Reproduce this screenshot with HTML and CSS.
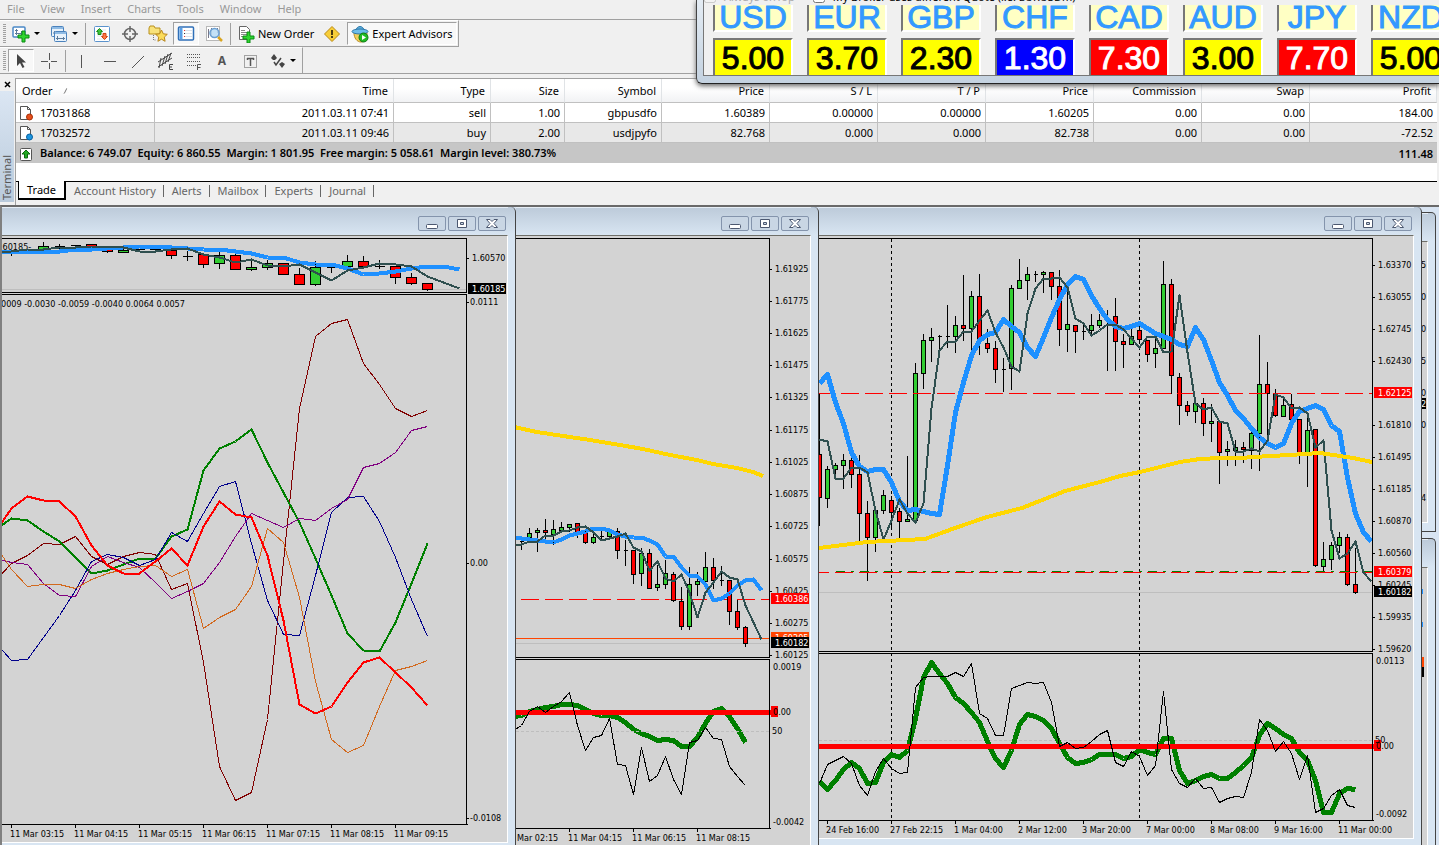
FILE: index.html
```html
<!DOCTYPE html>
<html lang="en">
<head>
  <meta charset="UTF-8" />
  <title>Trading Terminal</title>
  <link rel="stylesheet" href="styles.css">
</head>
<body>
  <nav class="menu">
    <a href="#">File</a>
    <a href="#">View</a>
    <a href="#">Insert</a>
    <a href="#">Charts</a>
    <a href="#">Tools</a>
    <a href="#">Window</a>
    <a href="#">Help</a>
  </nav>

  <div class="toolbars">
    <div class="toolbar">
      <span class="grip"></span>
      <button class="tool drop" aria-label="New chart">
        <svg width="18" height="18" viewBox="0 0 18 18"><rect x="1" y="2" width="12" height="10" rx="1" fill="#fff" stroke="#4a88c6" stroke-width="1.500"/><path d="M4.500 4v6M3 8.500h7M3 5.500h3M9.500 6v4" stroke="#5d7c9c" fill="none"/><path d="M10 6h3v4h4v3h-4v4h-3v-4H6v-3h4z" fill="#2fd52f" stroke="#0a8a12"/></svg>
        <i class="caret"></i>
      </button>
      <button class="tool drop" aria-label="Profiles">
        <svg width="18" height="18" viewBox="0 0 18 18"><rect x="1.500" y="1.500" width="12" height="10" rx="1" fill="#e8f2fb" stroke="#4a82bd"/><path d="M2 3h11" stroke="#8fbbe4" stroke-width="2"/><path d="M3 8h8M4.500 6v4" stroke="#5d7c9c"/><rect x="4.500" y="6.500" width="12" height="10" rx="1" fill="#e8f2fb" stroke="#4a82bd"/><path d="M5 8h11" stroke="#8fbbe4" stroke-width="2"/><path d="M6 13.500h9M7.500 11v4M13.500 12v3" stroke="#5d7c9c"/></svg>
        <i class="caret"></i>
      </button>
      <span class="sep"></span>
      <button class="tool" aria-label="Market watch">
        <svg width="18" height="18" viewBox="0 0 18 18"><rect x="1.500" y="1.500" width="15" height="15" rx="1" fill="#fff" stroke="#5b93cd"/><path d="M4 5h9M4 8h9M4 11h9M4 14h9" stroke="#dfe6ee"/><path d="M6.500 3.500l3 3H8v3H5v-3H3.500z" fill="#3cc63c" stroke="#1a8a1a"/><path d="M11.500 14.500l3-3H13v-3h-3v3H8.500z" fill="#ff7744" stroke="#d04414"/></svg>
      </button>
      <button class="tool" aria-label="Data window">
        <svg width="18" height="18" viewBox="0 0 18 18" fill="none" stroke="#666" stroke-width="1.500"><circle cx="9" cy="9" r="5.500"/><path d="M9 1v6M9 11v6M1 9h6M11 9h6"/></svg>
      </button>
      <button class="tool" aria-label="Navigator">
        <svg width="20" height="18" viewBox="0 0 20 18"><path d="M1 3l1-2h4l1 2h5v6H1z" fill="#f8e27a" stroke="#b8901c"/><path d="M5.500 10v5h3" stroke="#777" stroke-dasharray="1 1" fill="none"/><path d="M13.500 5l1.800 3.800 4 .5-3 2.800.8 4.200-3.600-2.100-3.600 2.100.8-4.200-3-2.800 4-.5z" fill="#fbdc5a" stroke="#b8861c"/></svg>
      </button>
      <button class="tool pressed" aria-label="Terminal">
        <svg width="18" height="18" viewBox="0 0 18 18"><rect x="1.500" y="2" width="15" height="13" rx="1" fill="#fff" stroke="#2f6fb8" stroke-width="1.500"/><path d="M4 3v11" stroke="#5aa0e6" stroke-width="3"/><path d="M8 5.500h7M8 8.500h7M8 11.500h7" stroke="#d9e1ea"/><path d="M7 5.500h1M7 11.500h1" stroke="#e33"/><path d="M7 8.500h1" stroke="#333"/></svg>
      </button>
      <button class="tool" aria-label="Strategy tester">
        <svg width="18" height="18" viewBox="0 0 18 18"><rect x="1.500" y="1.500" width="13" height="14" fill="#fff" stroke="#b8b8b8"/><path d="M3.500 4v9M6.500 3v8M12.500 3v5" stroke="#778"/><circle cx="9.500" cy="8" r="4.500" fill="#b8dcf6" fill-opacity=".85" stroke="#6a9fd2" stroke-width="1.500"/><path d="M13 12l4 4" stroke="#d9a520" stroke-width="2.500"/></svg>
      </button>
      <span class="sep"></span>
      <button class="tool wide">
        <svg width="18" height="18" viewBox="0 0 18 18"><path d="M2.500 1.500h7l3 3v10h-10z" fill="#fff" stroke="#666"/><path d="M4 5.500h4M4 7.500h6M4 9.500h6M4 11.500h3" stroke="#888"/><path d="M10 7h3v4h4v3h-4v4h-3v-4H6v-3h4z" fill="#2fd52f" stroke="#0a8a12"/></svg>
        New Order
      </button>
      <button class="tool" aria-label="MetaEditor">
        <svg width="18" height="18" viewBox="0 0 18 18"><path d="M9 1.500l7.500 7.500L9 16.500 1.500 9z" fill="#f7cd38" stroke="#bb8a10"/><path d="M9 5v5M9 11v2" stroke="#4a3a10" stroke-width="2"/></svg>
      </button>
      <button class="tool wide pressed">
        <svg width="18" height="18" viewBox="0 0 18 18"><path d="M3 8c0 5 3 9 7 9s6-4 6-9z" fill="#f2cf5a" stroke="#b88d24"/><path d="M5 6c0-6 8-6 8 0z" fill="#5db0e0" stroke="#2f78a8"/><ellipse cx="9" cy="6.500" rx="8" ry="2.500" fill="#6cbdea" stroke="#2f78a8"/><circle cx="12.500" cy="12.500" r="4.500" fill="#22bb22" stroke="#0d7a14"/><path d="M11 10v5l4-2.500z" fill="#fff"/></svg>
        Expert Advisors
      </button>
    </div>
    <div class="toolbar">
      <span class="grip"></span>
      <button class="tool pressed" aria-label="Cursor">
        <svg width="16" height="16" viewBox="0 0 16 16"><path d="M4 1v12l3-3 2.500 5 2-1L9 9.500h4z" fill="#444"/></svg>
      </button>
      <button class="tool" aria-label="Crosshair">
        <svg width="16" height="16" viewBox="0 0 16 16" stroke="#555"><path d="M8.500 0v7M8.500 10v6M0 8.500h7M10 8.500h6"/></svg>
      </button>
      <span class="sep"></span>
      <button class="tool" aria-label="Vertical line">
        <svg width="16" height="16" viewBox="0 0 16 16" stroke="#555"><path d="M7.500 2v13"/></svg>
      </button>
      <button class="tool" aria-label="Horizontal line">
        <svg width="16" height="16" viewBox="0 0 16 16" stroke="#555"><path d="M2 8.500h12"/></svg>
      </button>
      <button class="tool" aria-label="Trendline">
        <svg width="16" height="16" viewBox="0 0 16 16" stroke="#555"><path d="M2 15L14 3"/></svg>
      </button>
      <button class="tool" aria-label="Channel">
        <svg width="18" height="18" viewBox="0 0 18 18" stroke="#444" fill="none"><path d="M1 10L15 1M1 15L15 6M4 6L2 16M8 4L5 14M11 2L8 12M14 1l-3 9"/><path d="M16 12.500h-3.500v5H16M12.500 15H15"/></svg>
      </button>
      <button class="tool" aria-label="Fibonacci">
        <svg width="18" height="18" viewBox="0 0 18 18" stroke="#555" fill="none"><path d="M2 2.500h14M2 5.500h14M2 9.500h14M2 13.500h9" stroke-dasharray="1 1"/><path d="M16 12.500h-3.500V18M12.500 15.500h3"/></svg>
      </button>
      <button class="tool letter">A</button>
      <button class="tool" aria-label="Text label">
        <svg width="16" height="16" viewBox="0 0 16 16" stroke="#555" fill="none"><rect x="2.500" y="2.500" width="12" height="12" stroke-dasharray="1 1"/><path d="M5 5.500h7M8.500 5v8M5.500 5v2M11.500 5v2" stroke-width="1.500"/></svg>
      </button>
      <button class="tool drop" aria-label="Arrows">
        <svg width="16" height="16" viewBox="0 0 16 16"><path d="M1 5l3-4 3 4-2 2H3zM9 11l3-2 3 2-3 4z" fill="#444"/><path d="M4 9l2 3 5-7" stroke="#444" stroke-width="1.500" fill="none"/></svg>
        <i class="caret"></i>
      </button>
    </div>
  </div>

  <section class="terminal">
    <div class="caption">
      <button class="close" aria-label="Close terminal">
        <svg width="7" height="7" viewBox="0 0 7 7"><path d="M1 1l5 5M6 1L1 6" stroke="#000" stroke-width="1.500"/></svg>
      </button>
      <span class="caption-text">Terminal</span>
    </div>
    <div class="terminal-body">
      <table class="orders">
        <colgroup>
          <col style="width:139px"><col style="width:239px"><col style="width:97px"><col style="width:74px">
          <col style="width:97px"><col style="width:108px"><col style="width:108px"><col style="width:108px">
          <col style="width:108px"><col style="width:108px"><col style="width:108px"><col>
        </colgroup>
        <thead>
          <tr>
            <th>Order <svg class="sort" width="8" height="8" viewBox="0 0 8 8"><path d="M1 7L4 1" stroke="#777"/><path d="M4 1l3 6H1" stroke="#fff" fill="none"/></svg></th>
            <th>Time</th><th>Type</th><th>Size</th><th>Symbol</th><th>Price</th><th>S / L</th>
            <th>T / P</th><th>Price</th><th>Commission</th><th>Swap</th><th>Profit</th>
          </tr>
        </thead>
        <tbody>
          <tr>
            <td><svg class="doc" width="15" height="16" viewBox="0 0 15 16"><path d="M1.500 1.500h7l3 3v10h-10z" fill="#fff" stroke="#555"/><path d="M8.500 1.500v3h3" fill="none" stroke="#555"/><circle cx="10.500" cy="12" r="3" fill="#e8501c" stroke="#a83008"/></svg>17031868</td>
            <td>2011.03.11 07:41</td><td>sell</td><td>1.00</td><td>gbpusdfo</td><td>1.60389</td><td>0.00000</td>
            <td>0.00000</td><td>1.60205</td><td>0.00</td><td>0.00</td><td>184.00</td>
          </tr>
          <tr>
            <td><svg class="doc" width="15" height="16" viewBox="0 0 15 16"><path d="M1.500 1.500h7l3 3v10h-10z" fill="#fff" stroke="#555"/><path d="M8.500 1.500v3h3" fill="none" stroke="#555"/><circle cx="10.500" cy="12" r="3" fill="#1c96e0" stroke="#0860a0"/></svg>17032572</td>
            <td>2011.03.11 09:46</td><td>buy</td><td>2.00</td><td>usdjpyfo</td><td>82.768</td><td>0.000</td>
            <td>0.000</td><td>82.738</td><td>0.00</td><td>0.00</td><td>-72.52</td>
          </tr>
        </tbody>
        <tfoot>
          <tr>
            <td colspan="11"><svg class="doc" width="15" height="16" viewBox="0 0 15 16"><rect x="1.500" y="2.500" width="11" height="12" rx="1" fill="#fff" stroke="#555"/><path d="M7 4l4 4H8.500v4h-3V8H3z" fill="#22aa22" stroke="#0d6a10"/></svg>Balance: 6 749.07&nbsp; Equity: 6 860.55&nbsp; Margin: 1 801.95&nbsp; Free margin: 5 058.61&nbsp; Margin level: 380.73%</td>
            <td>111.48</td>
          </tr>
        </tfoot>
      </table>
      <div class="tabs">
        <button class="tab active">Trade</button>
        <button class="tab">Account History</button>
        <button class="tab">Alerts</button>
        <button class="tab">Mailbox</button>
        <button class="tab">Experts</button>
        <button class="tab">Journal</button>
      </div>
    </div>
  </section>

  <main class="desktop">
    <section class="window">
      <div class="title">
        <button aria-label="Minimize"><svg width="12" height="11" viewBox="0 0 12 11"><rect x=".5" y="6.500" width="11" height="4" rx="1" fill="#fff" stroke="#4c5870"/></svg></button>
        <button aria-label="Restore"><svg width="12" height="11" viewBox="0 0 12 11"><path d="M1.500 1.500h9v8h-9zM4.500 4.500v2h3v-2z" fill="#fff" fill-rule="evenodd" stroke="#4c5870"/></svg></button>
        <button aria-label="Close"><svg width="12" height="11" viewBox="0 0 12 11"><path d="M.5 1.500h3.500L6 3.500l2-2h3.500L8 5.500l3.500 4H8l-2-2-2 2H.5l3.500-4z" fill="#fff" stroke="#4c5870"/></svg></button>
      </div>
      <div class="client"><svg class="chart" id="chartSpreads"></svg></div>
    </section>
    <section class="window">
      <div class="title">
        <button aria-label="Minimize"><svg width="12" height="11" viewBox="0 0 12 11"><rect x=".5" y="6.500" width="11" height="4" rx="1" fill="#fff" stroke="#4c5870"/></svg></button>
        <button aria-label="Restore"><svg width="12" height="11" viewBox="0 0 12 11"><path d="M1.500 1.500h9v8h-9zM4.500 4.500v2h3v-2z" fill="#fff" fill-rule="evenodd" stroke="#4c5870"/></svg></button>
        <button aria-label="Close"><svg width="12" height="11" viewBox="0 0 12 11"><path d="M.5 1.500h3.500L6 3.500l2-2h3.500L8 5.500l3.500 4H8l-2-2-2 2H.5l3.500-4z" fill="#fff" stroke="#4c5870"/></svg></button>
      </div>
      <div class="client"><svg class="chart" id="chartM15"></svg></div>
    </section>
    <section class="window">
      <div class="title">
        <button aria-label="Minimize"><svg width="12" height="11" viewBox="0 0 12 11"><rect x=".5" y="6.500" width="11" height="4" rx="1" fill="#fff" stroke="#4c5870"/></svg></button>
        <button aria-label="Restore"><svg width="12" height="11" viewBox="0 0 12 11"><path d="M1.500 1.500h9v8h-9zM4.500 4.500v2h3v-2z" fill="#fff" fill-rule="evenodd" stroke="#4c5870"/></svg></button>
        <button aria-label="Close"><svg width="12" height="11" viewBox="0 0 12 11"><path d="M.5 1.500h3.500L6 3.500l2-2h3.500L8 5.500l3.500 4H8l-2-2-2 2H.5l3.500-4z" fill="#fff" stroke="#4c5870"/></svg></button>
      </div>
      <div class="client"><svg class="chart" id="chartH4"></svg></div>
    </section>
    <div class="stack">
      <section class="window upper">
        <div class="title"></div>
        <div class="client"><svg class="chart" id="backUpper"></svg></div>
      </section>
      <section class="window lower">
        <div class="title"></div>
        <div class="client"><svg class="chart" id="backLower"></svg></div>
      </section>
    </div>
  </main>

  <aside class="strength">
    <div class="strength-body">
      <div class="options">
        <label class="off"><input type="checkbox" disabled> Always onTop</label>
        <label><input type="checkbox"> My Broker uses different Quote (i.e. EURUSDm)</label>
      </div>
      <div class="meters">
        <span class="code">USD</span><span class="code">EUR</span><span class="code">GBP</span><span class="code">CHF</span>
        <span class="code">CAD</span><span class="code">AUD</span><span class="code">JPY</span><span class="code">NZD</span>
        <span class="value">5.00</span><span class="value">3.70</span><span class="value">2.30</span><span class="value low">1.30</span>
        <span class="value high">7.30</span><span class="value">3.00</span><span class="value high">7.70</span><span class="value">5.00</span>
      </div>
    </div>
  </aside>

  <script src="charts.js"></script>
</body>
</html>
```

FILE: styles.css
```css
* {
  box-sizing: border-box;
}
html, body {
  margin: 0;
  padding: 0;
  height: 100%;
}
body {
  display: flex;
  flex-direction: column;
  position: relative;
  overflow: hidden;
  background: #f0f0f0;
  color: #000;
  font-family: "Noto Sans", "Open Sans", sans-serif;
  font-size: 11px;
  line-height: 16px;
}
button {
  font: inherit;
  color: inherit;
  background: none;
  border: 0;
  padding: 0;
}
svg {
  flex: none;
}

/* menu */
.menu {
  display: flex;
  gap: 16px;
  height: 20px;
  padding: 1px 7px;
  border-bottom: 1px solid #a0a0a0;
}
.menu a {
  color: #999;
  text-decoration: none;
}

/* toolbars */
.toolbars {
  height: 54px;
  border-bottom: 1px solid #a0a0a0;
}
.toolbar {
  display: flex;
  align-items: center;
  gap: 2px;
  width: max-content;
  height: 27px;
  padding: 1px 1px 1px 3px;
  border-right: 1px solid #a0a0a0;
  border-bottom: 1px solid #a0a0a0;
  border-top: 1px solid #fff;
}
.grip {
  width: 3px;
  height: 20px;
  background: repeating-linear-gradient(#a0a0a0 0 1px, #f0f0f0 1px 2px);
}
.sep {
  width: 1px;
  height: 22px;
  margin: 0 1px;
  background: #a0a0a0;
}
.tool {
  display: flex;
  align-items: center;
  justify-content: center;
  width: 26px;
  height: 23px;
  white-space: nowrap;
}
.tool.drop {
  width: 36px;
  gap: 4px;
}
.tool.wide {
  width: auto;
  gap: 3px;
  padding: 0 3px;
}
.tool.pressed {
  background: #f8f8f8;
  border: 1px solid;
  border-color: #a0a0a0 #fff #fff #a0a0a0;
}
.tool.letter {
  color: #555;
  font-size: 12px;
  font-weight: bold;
}
.caret {
  border: 3px solid transparent;
  border-top-color: #000;
  border-bottom: 0;
}

/* terminal */
.terminal {
  display: flex;
  margin-top: 4px;
  height: 127px;
}
.caption {
  display: flex;
  flex-direction: column;
  align-items: center;
  width: 15px;
  padding: 0 1px 3px 0;
}
.close {
  display: flex;
  align-items: center;
  height: 13px;
}
.caption-text {
  flex: 1;
  width: 14px;
  padding-top: 2px;
  background: linear-gradient(#b9cadb, #dbe6f3);
  color: #555;
  line-height: 14px;
  writing-mode: vertical-rl;
  transform: rotate(180deg);
}
.terminal-body {
  display: flex;
  flex-direction: column;
  flex: 1;
  min-width: 0;
  margin-right: 2px;
  border-left: 1px solid #a0a0a0;
  border-top: 1px solid #a0a0a0;
  background: #fff;
}
.orders {
  width: 100%;
  table-layout: fixed;
  border-collapse: separate;
  border-spacing: 0;
}
.orders th {
  height: 24px;
  padding: 0 5px;
  border-right: 1px solid #e0e3e6;
  border-bottom: 1px solid #c0c0c0;
  background: linear-gradient(#fff 40%, #f1f2f4);
  font-weight: normal;
  text-align: right;
}
.orders td {
  height: 20px;
  padding: 1px 4px 0;
  border-right: 1px solid #c0c0c0;
  border-bottom: 1px solid #c0c0c0;
  text-align: right;
  white-space: nowrap;
}
.orders th:first-child {
  padding-left: 6px;
  text-align: left;
}
.orders td:first-child {
  padding-left: 3px;
  text-align: left;
}
.orders td:last-child {
  border-right: 0;
}
.orders tbody tr:nth-child(2) td {
  background: #e8e8e8;
}
.orders tfoot td {
  border: 0;
  background: #c6c6c6;
  font-weight: 600;
}
.sort {
  margin-left: 8px;
}
.doc {
  margin: -2px 6px 0 0;
  vertical-align: middle;
}
.tabs {
  display: flex;
  margin-top: auto;
  height: 24px;
  padding-left: 2px;
  border-top: 1px solid #000;
  background: #f0f0f0;
  color: #666;
}
.tab {
  position: relative;
  height: 18px;
  padding: 0 8px;
  line-height: 18px;
}
.tab + .tab::after {
  content: "";
  position: absolute;
  right: 0;
  top: 3px;
  height: 12px;
  border-right: 1px solid #666;
}
.tab.active {
  margin-top: -1px;
  height: 19px;
  border: 1px solid #000;
  border-top: 0;
  border-right-width: 2px;
  border-bottom-width: 2px;
  background: #fff;
  color: #000;
}

/* chart windows */
.desktop {
  display: flex;
  flex: 1;
  min-height: 0;
  overflow: hidden;
  border-top: 2px solid #696969;
  border-left: 2px solid #808080;
  background: #d8e4f2;
}
.window {
  display: flex;
  flex-direction: column;
  flex: none;
  padding-right: 7px;
  border-right: 1px solid #444;
  border-top-right-radius: 5px;
  background: linear-gradient(#bccad9, #d8e5f2 28px);
}
.title {
  display: flex;
  flex: none;
  justify-content: flex-end;
  gap: 2px;
  height: 28px;
  padding: 8px 2px 0 0;
  border-top: 1px solid #e6eef6;
}
.title button {
  display: flex;
  align-items: center;
  justify-content: center;
  width: 28px;
  height: 15px;
  border: 1px solid #8494ac;
  border-radius: 2px;
  background: #c9d6e4;
}
.client {
  flex: none;
  border-top: 1px solid #6e6e68;
  border-right: 1px solid #fff;
  border-bottom: 1px solid #fff;
  background: #d3d3d3;
}
.chart {
  display: block;
  font-family: "DejaVu Sans Condensed", "Noto Sans", sans-serif;
  font-size: 9px;
}
.stack {
  display: flex;
  flex-direction: column;
  align-items: flex-start;
  flex: 1;
  gap: 6px;
  min-width: 0;
  padding-top: 5px;
  overflow: hidden;
}
.stack .window {
  padding-bottom: 8px;
  border-top: 1px solid #444;
}
.stack .upper {
  border-bottom: 1px solid #444;
}

/* currency strength window */
.strength {
  position: absolute;
  left: 696px;
  right: 0;
  top: 0;
  height: 84px;
  padding: 0 0 7px 6px;
  overflow: hidden;
  border-left: 1px solid #444;
  border-bottom: 1px solid #222;
  border-bottom-left-radius: 6px;
  background: linear-gradient(#e4ecf4, #c4d2e0);
  box-shadow: 0 2px 5px #666;
}
.strength-body {
  height: 76px;
  overflow: hidden;
  border-left: 1px solid #777;
  border-bottom: 1px solid #777;
  background: #f0f0f0;
}
.options {
  display: flex;
  gap: 18px;
  height: 16px;
  margin-top: -11px;
  white-space: nowrap;
}
.options label {
  display: flex;
  align-items: center;
  gap: 8px;
}
.options input {
  width: 12px;
  height: 12px;
  margin: 0;
}
.options .off {
  color: #aaa;
}
.meters {
  display: grid;
  grid-template-columns: repeat(8, 80px);
  gap: 6px 14px;
  padding-left: 9px;
  font-family: "Liberation Sans", Arial, sans-serif;
  font-size: 32px;
  text-align: center;
}
.meters span {
  border: 2px solid;
  border-color: #777 #fff #fff #777;
}
.meters .code {
  height: 27px;
  border-top: 0;
  background: #ffffc4;
  color: #3399ff;
  line-height: 24px;
  -webkit-text-stroke: 1px;
}
.meters .value {
  height: 40px;
  background: #ff0;
  line-height: 36px;
  -webkit-text-stroke: 1px;
}
.meters .low {
  background: #00f;
  color: #fff;
}
.meters .high {
  background: #f00;
  color: #fff;
}
```

FILE: charts.js
```js
const NS = "http://www.w3.org/2000/svg";
const BLUE = "#1e90ff", SLATE = "#2f4f4f", GOLD = "#ffd700";

function add(svg, tag, attrs, text) {
  const el = document.createElementNS(NS, tag);
  for (const key in attrs) el.setAttribute(key, attrs[key]);
  if (text !== undefined) el.textContent = text;
  svg.appendChild(el);
}

function open(id, x, y, w, h) {
  const svg = document.getElementById(id);
  svg.setAttribute("viewBox", [x, y, w, h].join(" "));
  svg.setAttribute("width", w);
  svg.setAttribute("height", h);
  return svg;
}

function line(svg, x1, y1, x2, y2, color, dash, width) {
  add(svg, "path", {
    d: `M${x1} ${y1}L${x2} ${y2}`, stroke: color, "stroke-width": width || 1,
    "stroke-dasharray": dash || "none", "shape-rendering": "crispEdges"
  });
}

// evenly spaced values
function series(svg, x0, step, ys, color, width) {
  curve(svg, ys.map((y, i) => [x0 + i * step + 0.5, y + 0.5]), color, width);
}

function curve(svg, pts, color, width) {
  add(svg, "polyline", {
    points: pts.map(p => p.join(",")).join(" "), fill: "none", stroke: color,
    "stroke-width": width, "stroke-linejoin": "round", "shape-rendering": "crispEdges"
  });
}

// each bar: high, body top, body bottom, low, direction (1 up, -1 down, 0 flat)
function candles(svg, x0, step, half, bars) {
  bars.forEach((b, i) => {
    if (!b) return;
    const x = x0 + i * step + 0.5;
    line(svg, x, b[0], x, b[3] + 1, "#000");
    if (b[4] === 0) {
      line(svg, x - half, b[1] + 0.5, x + half, b[1] + 0.5, "#000");
      return;
    }
    add(svg, "rect", {
      x: x - half, y: b[1] + 0.5, width: half * 2, height: b[2] - b[1],
      fill: b[4] > 0 ? "#32cd32" : "#f00", stroke: "#000", "shape-rendering": "crispEdges"
    });
  });
}

function label(svg, x, y, text, color) {
  add(svg, "text", { x: x, y: y + 3, fill: color || "#000" }, text);
}

function tag(svg, x, y, text, fill) {
  add(svg, "rect", { x: x - 4, y: y - 6, width: 38, height: 11, fill: fill });
  label(svg, x, y, text, "#fff");
}

function priceScale(svg, axis, x, ys, texts) {
  ys.forEach((y, i) => {
    line(svg, axis, y + 0.5, axis + 3, y + 0.5, "#000");
    label(svg, x, y, texts[i]);
  });
}

function timeScale(svg, y, x0, step, texts) {
  texts.forEach((text, i) => {
    const x = x0 + i * step;
    line(svg, x + 0.5, y, x + 0.5, y + 4, "#000");
    label(svg, x - 1, y + 10, text);
  });
}

function panes(svg, left, axis, top, split, bottom) {
  line(svg, left, top + 0.5, axis + 1, top + 0.5, "#000");
  line(svg, left, split + 0.5, axis + 1, split + 0.5, "#000");
  line(svg, left, split + 2.5, axis + 1, split + 2.5, "#000");
  line(svg, left, bottom + 0.5, axis + 2, bottom + 0.5, "#000");
  line(svg, axis + 0.5, top, axis + 0.5, split, "#000");
  line(svg, axis + 0.5, split + 2, axis + 0.5, bottom, "#000");
}

function drawSpreads() {
  const svg = open("chartSpreads", 2, 236, 505, 606);
  line(svg, 2, 289.5, 466, 289.5, "#bebebe");
  label(svg, 0, 247, ".60185-");
  candles(svg, 11, 16, 5, [
    [250, 250, 250, 255, 0], null, [242, 246, 249, 249, 1], [244, 246, 246, 248, 0], [245, 245, 245, 246, 0],
    [244, 244, 247, 247, -1], [246, 246, 251, 252, -1], [248, 250, 252, 252, 1], [249, 249, 249, 250, 0],
    [246, 246, 249, 249, 1], [246, 250, 255, 258, -1], [251, 256, 256, 260, 0], [254, 254, 264, 267, -1],
    [252, 255, 263, 268, 1], [253, 255, 269, 269, -1], [261, 267, 269, 270, 1], [260, 263, 267, 269, 1],
    [263, 263, 274, 274, -1], [268, 274, 284, 284, -1], [261, 267, 284, 285, 1], [265, 267, 267, 272, 0],
    [255, 261, 266, 266, 1], [256, 261, 266, 266, -1], [260, 266, 266, 268, 0], [266, 266, 277, 283, -1],
    [273, 277, 283, 284, -1], [283, 283, 289, 290, -1]
  ]);
  series(svg, -5, 16, [251, 251, 251, 251, 251, 249, 249, 248, 247, 246, 246, 247, 248, 249, 249, 251, 253, 257,
    257, 262, 264, 264, 268, 274, 273, 271, 268, 266, 266, 269], BLUE, 4);
  series(svg, -5, 16, [252, 251, 249, 249, 247, 247, 246, 246, 247, 251, 251, 249, 248, 254, 257, 262, 259, 265,
    266, 264, 272, 280, 270, 267, 263, 264, 266, 276, 282, 288], SLATE, 2);

  series(svg, -5, 16, [580, 563, 555, 543, 544, 536, 556, 564, 556, 552, 554, 589, 583, 662, 766, 800, 792, 719,
    561, 408, 336, 323, 319, 363, 384, 408, 416, 410], "#800000", 1);
  series(svg, -5, 16, [529, 518, 520, 531, 541, 557, 573, 570, 564, 558, 558, 536, 529, 470, 448, 441, 429, 462,
    492, 522, 558, 595, 633, 650, 651, 622, 583, 543], "#008000", 2);
  series(svg, -5, 16, [642, 660, 659, 637, 615, 590, 561, 554, 557, 565, 559, 532, 541, 513, 486, 481, 543, 600,
    634, 635, 575, 512, 497, 496, 521, 557, 599, 636], "#00008b", 1);
  series(svg, -5, 16, [558, 562, 564, 583, 595, 596, 566, 556, 562, 567, 582, 598, 591, 583, 562, 536, 513, 520,
    527, 518, 520, 508, 499, 467, 463, 452, 430, 426], "#800080", 1);
  series(svg, -5, 16, [545, 569, 586, 584, 584, 588, 579, 573, 569, 566, 565, 576, 569, 628, 617, 609, 586, 528,
    542, 597, 681, 739, 752, 745, 706, 670, 666, 660], "#d2691e", 1);
  series(svg, -5, 16, [531, 508, 496, 500, 501, 516, 545, 565, 573, 573, 561, 548, 565, 526, 501, 514, 517, 555,
    620, 704, 713, 706, 682, 662, 657, 672, 687, 705], "#f00", 2);

  panes(svg, 2, 466, 238, 292, 824);
  label(svg, 1, 304, "0009 -0.0030 -0.0059 -0.0040 0.0064 0.0057");
  priceScale(svg, 466, 472, [258], ["1.60570"]);
  tag(svg, 472, 289, "1.60185", "#000");
  priceScale(svg, 466, 470, [302, 563, 818], ["0.0111", "0.00", "-0.0108"]);
  timeScale(svg, 824, 11, 64, ["11 Mar 03:15", "11 Mar 04:15", "11 Mar 05:15", "11 Mar 06:15",
    "11 Mar 07:15", "11 Mar 08:15", "11 Mar 09:15"]);
}

function drawM15() {
  const svg = open("chartM15", 516, 236, 294, 614);
  line(svg, 521, 599.5, 769, 599.5, "#008000", "9 6 3 6");
  line(svg, 521, 599.5, 769, 599.5, "#f00", "18 6");
  line(svg, 516, 643.5, 769, 643.5, "#bebebe");
  line(svg, 516, 638.5, 769, 638.5, "#ff4500");
  candles(svg, 521, 8, 2, [
    [539, 541, 541, 549, 0], [528, 533, 537, 541, 1], [528, 530, 532, 551, 1], [519, 530, 532, 542, -1],
    [520, 529, 534, 544, 1], [522, 527, 530, 531, 1], [524, 524, 527, 531, 1], [523, 523, 533, 537, -1],
    [531, 531, 542, 543, -1], [533, 537, 542, 543, 1], [530, 536, 536, 538, 0], [531, 531, 536, 536, 1],
    [528, 531, 550, 558, -1], [540, 550, 550, 565, 0], [550, 550, 574, 583, -1], [548, 553, 573, 585, 1],
    [549, 553, 588, 588, -1], [565, 584, 587, 590, 1], [560, 573, 584, 588, 1], [572, 574, 600, 601, -1],
    [587, 601, 626, 629, -1], [567, 584, 626, 629, 1], [572, 581, 584, 595, 1], [552, 567, 581, 581, 1],
    [558, 567, 580, 588, -1], [566, 580, 580, 585, 0], [580, 580, 611, 624, -1], [600, 611, 627, 629, -1],
    [626, 627, 643, 646, -1]
  ]);
  series(svg, 513, 8, [537, 538, 539, 540, 541, 542, 539, 535, 533, 531, 528, 528, 530, 534, 536, 537, 537, 540,
    544, 556, 556, 567, 575, 576, 584, 600, 598, 593, 585, 580, 579, 590], BLUE, 4);
  series(svg, 513, 8, [544, 544, 541, 541, 535, 535, 531, 530, 527, 526, 532, 540, 538, 536, 533, 547, 551, 570,
    561, 578, 581, 574, 592, 617, 592, 582, 571, 577, 579, 605, 622, 639], SLATE, 2);
  curve(svg, [[514, 427], [537, 432], [563, 436], [590, 440], [620, 445], [643, 449], [670, 455], [697, 460],
    [713, 464], [737, 468], [753, 472], [763, 476]], GOLD, 4);

  series(svg, 513, 8, [716, 715, 711, 709, 707, 706, 704, 704, 705, 709, 713, 715, 715, 717, 722, 729, 733, 736,
    740, 739, 740, 746, 746, 737, 723, 711, 708, 716, 728, 742], "#008000", 5);
  line(svg, 516, 712.5, 771, 712.5, "#f00", null, 5);
  line(svg, 516, 731.5, 769, 731.5, "#bebebe", "3 2");
  series(svg, 513, 8, [730, 725, 711, 706, 712, 706, 701, 692, 725, 750, 737, 735, 718, 764, 765, 794, 747, 781,
    775, 756, 779, 794, 742, 740, 727, 738, 739, 766, 776, 785], "#000", 1);

  panes(svg, 516, 769, 238, 657, 828);
  priceScale(svg, 769, 775, [269, 301, 333, 365, 397, 430, 462, 494, 526, 559, 591, 623, 655],
    ["1.61925", "1.61775", "1.61625", "1.61475", "1.61325", "1.61175", "1.61025", "1.60875", "1.60725",
      "1.60575", "1.60425", "1.60275", "1.60125"]);
  tag(svg, 775, 599, "1.60386", "#f00");
  tag(svg, 775, 638, "1.60205", "#ff4500");
  tag(svg, 775, 643, "1.60182", "#000");
  add(svg, "rect", { x: 771, y: 706, width: 7, height: 11, fill: "#f00" });
  label(svg, 773, 667, "0.0019");
  label(svg, 773, 712, "0.00");
  label(svg, 772, 731, "50");
  label(svg, 773, 822, "-0.0042");
  timeScale(svg, 828, 569, 64, ["11 Mar 04:15", "11 Mar 06:15", "11 Mar 08:15"]);
  label(svg, 517, 838, "Mar 02:15");
}

function drawH4() {
  const svg = open("chartH4", 819, 236, 594, 602);
  line(svg, 819, 592.5, 1372, 592.5, "#bebebe");
  line(svg, 891.5, 239, 891.5, 820, "#000", "3 3");
  line(svg, 1139.5, 239, 1139.5, 820, "#000", "3 3");
  candles(svg, 819, 8, 2, [
    [393, 454, 497, 525, -1], [466, 469, 498, 507, 1], [463, 465, 469, 476, 1], [454, 460, 465, 488, 1],
    [457, 460, 474, 487, -1], [455, 474, 513, 540, -1], [501, 513, 537, 580, -1], [510, 510, 537, 551, 1],
    [490, 495, 510, 513, 1], [496, 500, 512, 527, -1], [508, 511, 521, 537, -1], [456, 519, 521, 521, 1],
    [363, 373, 520, 521, 1], [334, 340, 373, 388, 1], [328, 337, 340, 361, 1], [335, 336, 336, 348, 0],
    [305, 336, 336, 347, 0], [316, 325, 336, 352, 1], [275, 325, 328, 340, -1], [291, 296, 328, 349, 1],
    [274, 296, 341, 354, -1], [329, 343, 348, 352, -1], [341, 348, 369, 382, -1], [358, 369, 369, 391, 0],
    [285, 288, 368, 389, 1], [259, 280, 288, 288, 1], [267, 274, 280, 299, 1], [271, 274, 274, 281, 0],
    [271, 272, 274, 292, 1], [272, 272, 286, 299, -1], [270, 286, 329, 345, -1], [288, 324, 329, 351, 1],
    [325, 325, 331, 352, -1], [325, 331, 331, 339, 0], [314, 325, 330, 333, 1], [314, 320, 325, 327, 1],
    [310, 320, 320, 370, 0], [298, 316, 341, 370, -1], [334, 341, 344, 367, -1], [328, 336, 344, 344, 1],
    [325, 330, 339, 342, -1], [340, 340, 354, 361, -1], [338, 348, 353, 367, 1], [261, 284, 348, 348, 1],
    [279, 284, 375, 393, -1], [373, 377, 405, 424, -1], [401, 405, 411, 415, -1], [403, 403, 411, 422, 1],
    [398, 403, 423, 435, -1], [404, 421, 423, 441, 1], [421, 421, 452, 483, -1], [441, 449, 451, 465, 1],
    [440, 447, 450, 465, 1], [442, 447, 449, 462, -1], [425, 433, 450, 468, 1], [335, 384, 433, 470, 1],
    [362, 384, 393, 443, -1], [389, 393, 415, 416, -1], [398, 405, 416, 416, 1], [394, 404, 419, 419, -1],
    [419, 419, 452, 463, -1], [418, 430, 452, 486, 1], [429, 429, 565, 566, -1], [542, 559, 566, 571, 1],
    [542, 545, 559, 569, 1], [532, 537, 545, 552, 1], [534, 537, 584, 585, -1], [548, 584, 592, 593, -1]
  ]);
  line(svg, 817, 393.5, 1372, 393.5, "#f00", "18 6");
  line(svg, 836, 571.5, 1372, 571.5, "#008000", "9 6 3 6");
  line(svg, 811, 572.5, 1372, 572.5, "#f00", "18 6");
  series(svg, 819, 8, [383, 374, 402, 423, 452, 466, 471, 469, 469, 482, 501, 510, 509, 511, 513, 514, 465, 412,
    382, 355, 340, 334, 332, 319, 326, 332, 347, 356, 337, 317, 299, 284, 276, 279, 295, 308, 319, 326, 328, 326,
    323, 328, 333, 336, 339, 344, 346, 327, 339, 360, 382, 395, 410, 418, 428, 437, 443, 447, 443, 423, 411, 408,
    405, 409, 425, 431, 477, 513, 532, 541], BLUE, 5);
  series(svg, 819, 8, [439, 441, 478, 478, 467, 467, 472, 510, 539, 520, 499, 513, 522, 503, 408, 350, 341, 341,
    331, 331, 320, 310, 332, 347, 366, 371, 313, 288, 278, 278, 277, 287, 318, 323, 335, 330, 324, 324, 329, 338,
    347, 336, 336, 352, 351, 295, 352, 403, 409, 407, 421, 423, 451, 451, 448, 451, 440, 394, 397, 408, 407, 413,
    447, 440, 530, 558, 553, 541, 572, 581], SLATE, 2);
  curve(svg, [[819, 548], [867, 542], [925, 539], [955, 528], [987, 517], [1022, 508], [1065, 491], [1100, 482],
    [1120, 476], [1140, 472], [1160, 467], [1180, 462], [1200, 459], [1220, 458], [1240, 458], [1270, 456],
    [1290, 455], [1320, 453], [1340, 456], [1353, 458], [1372, 462]], GOLD, 4);

  line(svg, 819, 740.5, 1372, 740.5, "#bebebe", "3 2");
  series(svg, 819, 8, [781, 789, 780, 769, 762, 768, 783, 782, 762, 754, 757, 750, 718, 677, 662, 673, 683, 697,
    703, 712, 722, 741, 758, 767, 750, 724, 714, 716, 720, 728, 743, 757, 763, 762, 759, 754, 754, 754, 758, 756,
    749, 752, 754, 738, 738, 770, 783, 780, 776, 774, 778, 778, 772, 765, 757, 735, 723, 728, 734, 738, 752, 760,
    780, 812, 812, 793, 788, 789], "#008000", 5);
  line(svg, 819, 746.5, 1374, 746.5, "#f00", null, 5);
  series(svg, 819, 8, [783, 764, 760, 756, 763, 785, 795, 771, 758, 768, 773, 772, 687, 677, 676, 676, 676, 672,
    676, 663, 713, 718, 735, 735, 688, 685, 682, 683, 682, 702, 746, 742, 748, 747, 741, 734, 730, 762, 766, 751,
    756, 775, 765, 691, 769, 783, 787, 778, 788, 787, 802, 798, 796, 797, 772, 719, 730, 751, 741, 753, 779, 755,
    812, 808, 795, 789, 805, 807], "#000", 1);

  panes(svg, 819, 1372, 238, 651, 820);
  priceScale(svg, 1372, 1378, [265, 297, 329, 361, 425, 457, 489, 521, 553, 585, 617, 649],
    ["1.63370", "1.63055", "1.62745", "1.62430", "1.61810", "1.61495", "1.61185", "1.60870", "1.60560",
      "1.60245", "1.59935", "1.59620"]);
  tag(svg, 1378, 393, "1.62125", "#f00");
  tag(svg, 1378, 572, "1.60379", "#f00");
  tag(svg, 1378, 592, "1.60182", "#000");
  add(svg, "rect", { x: 1374, y: 740, width: 7, height: 11, fill: "#f00" });
  label(svg, 1376, 661, "0.0113");
  label(svg, 1375, 740, "50");
  label(svg, 1376, 746, "0.00");
  label(svg, 1376, 814, "-0.0092");
  timeScale(svg, 820, 827, 64, ["24 Feb 16:00", "27 Feb 22:15", "1 Mar 04:00", "2 Mar 12:00", "3 Mar 20:00",
    "7 Mar 00:00", "8 Mar 08:00", "9 Mar 16:00", "11 Mar 00:00"]);
}

// slivers of the windows that lie behind
function drawBack() {
  const upper = open("backUpper", 1422, 242, 5, 280);
  [[265, "5"], [297, "0"], [329, "0"], [361, "5"], [393, "0"], [425, "0"], [498, "4"]]
    .forEach(l => label(upper, 1421, l[0], l[1]));
  add(upper, "rect", { x: 1420, y: 398, width: 6, height: 11, fill: "#000" });
  label(upper, 1421, 404, "2", "#fff");

  const lower = open("backLower", 1422, 568, 5, 290);
  line(lower, 1422, 591.5, 1423, 591.5, BLUE, null, 5);
  line(lower, 1422, 624.5, 1423, 624.5, BLUE, null, 5);
  add(lower, "rect", { x: 1422, y: 657, width: 2, height: 10, fill: "#ff4500" });
  add(lower, "rect", { x: 1422, y: 667, width: 2, height: 10, fill: "#000" });
}

drawSpreads();
drawM15();
drawH4();
drawBack();
```
